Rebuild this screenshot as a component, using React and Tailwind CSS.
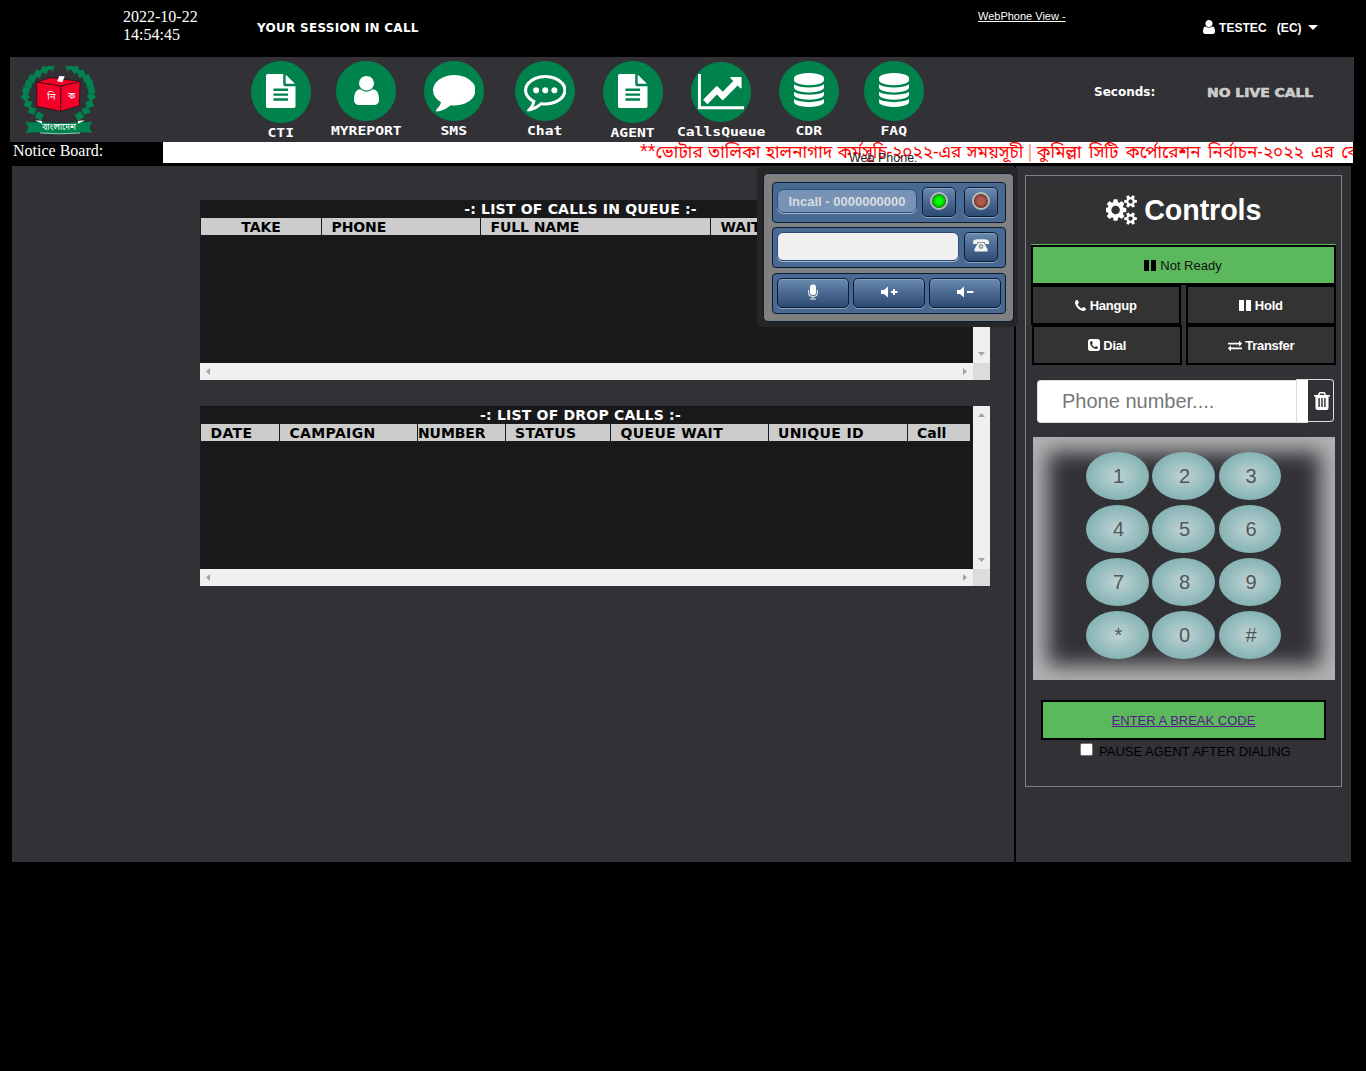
import React from "react";

const PATHS = {
  file: {
    box: "128 0 1536 1792",
    d: "M1596 476q14 14 28 36h-472v-472q22 14 36 28zm-476 164h544v1056q0 40-28 68t-68 28h-1344q-40 0-68-28t-28-68v-1600q0-40 28-68t68-28h800v544q0 40 28 68t68 28zm160 736v-64q0-14-9-23t-23-9h-704q-14 0-23 9t-9 23v64q0 14 9 23t23 9h704q14 0 23-9t9-23zm0-256v-64q0-14-9-23t-23-9h-704q-14 0-23 9t-9 23v64q0 14 9 23t23 9h704q14 0 23-9t9-23zm0-256v-64q0-14-9-23t-23-9h-704q-14 0-23 9t-9 23v64q0 14 9 23t23 9h704q14 0 23-9t9-23z",
  },
  user: {
    box: "256 128 1280 1536",
    d: "M1536 1399q0 109-62.5 187t-150.5 78h-854q-88 0-150.5-78t-62.5-187q0-85 8.5-160.5t31.5-152 58.5-131 94-89 134.5-34.5q131 128 313 128t313-128q76 0 134.5 34.5t94 89 58.5 131 31.5 152 8.5 160.5zm-256-887q0 159-112.5 271.5t-271.5 112.5-271.5-112.5-112.5-271.5 112.5-271.5 271.5-112.5 271.5 112.5 112.5 271.5z",
  },
  comment: {
    box: "0 256 1792 1540",
    d: "M1792 896q0 174-120 321.5t-326 233-450 85.5q-70 0-145-8-198 175-460 242-49 14-114 22-17 2-30.5-9t-17.5-29v-1q-3-4-.5-12t2-10 4.5-9.5l6-9 7-8.5 8-9q7-8 31-34.5t34.5-38 31-39.5 32.5-51 27-59 26-76q-157-89-247.5-220t-90.5-281q0-130 71-248.5t191-204.5 286-136.5 348-50.5q244 0 450 85.5t326 233 120 321.5z",
  },
  commenting: {
    box: "0 256 1792 1540",
    d: "M640 896q0 53-37.5 90.5t-90.5 37.5-90.5-37.5-37.5-90.5 37.5-90.5 90.5-37.5 90.5 37.5 37.5 90.5zm384 0q0 53-37.5 90.5t-90.5 37.5-90.5-37.5-37.5-90.5 37.5-90.5 90.5-37.5 90.5 37.5 37.5 90.5zm384 0q0 53-37.5 90.5t-90.5 37.5-90.5-37.5-37.5-90.5 37.5-90.5 90.5-37.5 90.5 37.5 37.5 90.5zm-512-512q-204 0-381.5 69.5t-282 187.5-104.5 255q0 112 71.5 213.5t201.5 175.5l87 50-27 96q-24 91-70 172 152-63 275-171l43-38 57 6q69 8 130 8 204 0 381.5-69.5t282-187.5 104.5-255-104.5-255-282-187.5-381.5-69.5zm896 512q0 174-120 321.5t-326 233-450 85.5q-70 0-145-8-198 175-460 242-49 14-114 22h-5q-15 0-27-10.5t-16-27.5v-1q-3-4-.5-12t2-10 4.5-9.5l6-9 7-8.5 8-9q7-8 31-34.5t34.5-38 31-39.5 32.5-51 27-59 26-76q-157-89-247.5-220t-90.5-281q0-174 120-321.5t326-233 450-85.5 450 85.5 326 233 120 321.5z",
  },
  chart: {
    box: "0 128 2048 1536",
    d: "M2048 1536v128h-2048v-1536h128v1408h1920zm-128-1248v435q0 21-19.5 29.5t-35.5-7.5l-121-121-633 633q-10 10-23 10t-23-10l-233-233-416 416-192-192 585-585q10-10 23-10t23 10l233 233 464-464-121-121q-16-16-7.5-35.5t29.5-19.5h435q14 0 23 9t9 23z",
  },
  database: {
    box: "128 0 1536 1792",
    d: "M896 768q237 0 443-43t325-127v170q0 69-103 128t-280 93.5-385 34.5-385-34.5-280-93.5-103-128v-170q119 84 325 127t443 43zm0 768q237 0 443-43t325-127v170q0 69-103 128t-280 93.5-385 34.5-385-34.5-280-93.5-103-128v-170q119 84 325 127t443 43zm0-384q237 0 443-43t325-127v170q0 69-103 128t-280 93.5-385 34.5-385-34.5-280-93.5-103-128v-170q119 84 325 127t443 43zm0-1152q208 0 385 34.5t280 93.5 103 128v128q0 69-103 128t-280 93.5-385 34.5-385-34.5-280-93.5-103-128v-128q0-69 103-128t280-93.5 385-34.5z",
  },
  cogs: {
    box: "0 0 1920 1792",
    d: "M832 896q0-106-75-181t-181-75-181 75-75 181 75 181 181 75 181-75 75-181zm768 512q0-52-38-90t-90-38-90 38-38 90q0 53 37.5 90.5t90.5 37.5 90.5-37.5 37.5-90.5zm0-1024q0-52-38-90t-90-38-90 38-38 90q0 53 37.5 90.5t90.5 37.5 90.5-37.5 37.5-90.5zm-384 421v185q0 10-7 19.5t-16 10.5l-155 24q-11 35-32 76 34 48 90 115 7 11 7 20 0 12-7 19-23 30-82.5 89.5t-78.5 59.5q-11 0-21-7l-115-90q-37 19-77 31-11 108-23 155-7 24-30 24h-186q-11 0-20-7.5t-10-17.5l-23-153q-34-10-75-31l-118 89q-7 7-20 7-11 0-21-8-144-133-144-160 0-9 7-19 10-14 41-53t47-61q-23-44-35-82l-152-24q-10-1-17-9.5t-7-19.5v-185q0-10 7-19.5t16-10.5l155-24q11-35 32-76-34-48-90-115-7-11-7-20 0-12 7-20 22-30 82-89t79-59q11 0 21 7l115 90q34-18 77-32 11-108 23-154 7-24 30-24h186q11 0 20 7.5t10 17.5l23 153q34 10 75 31l118-89q8-7 20-7 11 0 21 8 144 133 144 160 0 8-7 19-12 16-42 54t-45 60q23 48 34 82l152 23q10 2 17 10.5t7 19.5zm640 533v140q0 16-149 31-12 27-30 52 51 113 51 138 0 4-4 7-122 71-124 71-8 0-46-47t-52-68q-20 2-30 2t-30-2q-14 21-52 68t-46 47q-2 0-124-71-4-3-4-7 0-25 51-138-18-25-30-52-149-15-149-31v-140q0-16 149-31 13-29 30-52-51-113-51-138 0-4 4-7 4-2 35-20t59-34 30-16q8 0 46 46.5t52 67.5q20-2 30-2t30 2q51-71 92-112l6-2q4 0 124 70 4 3 4 7 0 25-51 138 17 23 30 52 149 15 149 31zm0-1024v140q0 16-149 31-12 27-30 52 51 113 51 138 0 4-4 7-122 71-124 71-8 0-46-47t-52-68q-20 2-30 2t-30-2q-14 21-52 68t-46 47q-2 0-124-71-4-3-4-7 0-25 51-138-18-25-30-52-149-15-149-31v-140q0-16 149-31 13-29 30-52-51-113-51-138 0-4 4-7 4-2 35-20t59-34 30-16q8 0 46 46.5t52 67.5q20-2 30-2t30 2q51-71 92-112l6-2q4 0 124 70 4 3 4 7 0 25-51 138 17 23 30 52 149 15 149 31z",
  },
  phone: {
    box: "192 128 1408 1408",
    d: "M1600 1240q0 27-10 70.5t-21 68.5q-21 50-122 106-94 51-186 51-27 0-53-3.5t-57.5-12.5-47-14.5-55.5-20.5-49-18q-98-35-175-83-127-79-264-216t-216-264q-48-77-83-175-3-9-18-49t-20.5-55.5-14.5-47-12.5-57.5-3.5-53q0-92 51-186 56-101 106-122 25-11 68.5-21t70.5-10q14 0 21 3 18 6 53 76 11 19 30 54t35 63.5 31 53.5q3 4 17.5 25t21.5 35.5 7 28.5q0 20-28.5 50t-62 55-62 53-28.5 46q0 9 5 22.5t8.5 20.5 14 24 11.5 19q76 137 174 235t235 174q2 1 19 11.5t24 14 20.5 8.5 22.5 5q18 0 46-28.5t53-62 55-62 50-28.5q14 0 28.5 7t35.5 21.5 25 17.5q25 15 53.5 31t63.5 35 54 30q70 35 76 53 3 7 3 21z",
  },
  phoneSquare: {
    box: "128 128 1536 1536",
    d: "M1408 1193q0-11-2-16t-18-16.5-40.5-25-47.5-26.5-45.5-25-28.5-15q-5-3-19-13t-25-15-21-5q-15 0-36.5 20.5t-39.5 45-38.5 45-33.5 20.5q-7 0-16.5-3.5t-15.5-6.5-17-9.5-14-8.5q-99-55-170-126.5t-127-170.5q-2-3-8.5-14t-9.5-17-6.5-15.5-3.5-16.5q0-13 20.5-33.5t45-38.5 45-39.5 20.5-36.5q0-10-5-21t-15-25-13-19q-3-6-15-28.5t-25-45.5-26.5-47.5-25-40.5-16.5-18-16-2q-48 0-101 22-46 21-80 94.5t-34 130.5q0 16 2.5 34t5 30.5 9 33 10 29.5 12.5 33 11 30q60 164 216.5 320.5t320.5 216.5q6 2 30 11t33 12.5 29.5 10 33 9 30.5 5 34 2.5q57 0 130.5-34t94.5-80q22-53 22-101zm256-777v960q0 119-84.5 203.5t-203.5 84.5h-960q-119 0-203.5-84.5t-84.5-203.5v-960q0-119 84.5-203.5t203.5-84.5h960q119 0 203.5 84.5t84.5 203.5z",
  },
  exchange: {
    box: "0 160 1792 1472",
    d: "M1792 1184v192q0 13-9.5 22.5t-22.5 9.5h-1376v192q0 13-9.5 22.5t-22.5 9.5q-12 0-24-10l-319-320q-9-9-9-22 0-14 9-23l320-320q9-9 23-9 13 0 22.5 9.5t9.5 22.5v192h1376q13 0 22.5 9.5t9.5 22.5zm0-544q0 14-9 23l-320 320q-9 9-23 9-13 0-22.5-9.5t-9.5-22.5v-192h-1376q-13 0-22.5-9.5t-9.5-22.5v-192q0-13 9.5-22.5t22.5-9.5h1376v-192q0-14 9-23t23-9q12 0 24 10l319 319q9 9 9 23z",
  },
  trash: {
    box: "192 128 1408 1536",
    d: "M704 1376v-704q0-14-9-23t-23-9h-64q-14 0-23 9t-9 23v704q0 14 9 23t23 9h64q14 0 23-9t9-23zm256 0v-704q0-14-9-23t-23-9h-64q-14 0-23 9t-9 23v704q0 14 9 23t23 9h64q14 0 23-9t9-23zm256 0v-704q0-14-9-23t-23-9h-64q-14 0-23 9t-9 23v704q0 14 9 23t23 9h64q14 0 23-9t9-23zm-544-992h448l-48-117q-7-9-17-11h-317q-10 2-17 11zm928 32v64q0 14-9 23t-23 9h-96v948q0 83-47 143.5t-113 60.5h-832q-66 0-113-58.5t-47-141.5v-952h-96q-14 0-23-9t-9-23v-64q0-14 9-23t23-9h309l70-167q15-37 54-63t79-26h320q40 0 79 26t54 63l70 167h309q14 0 23 9t9 23z",
  },
  pause: { box: "0 0 12 12", d: "M0 0h5v12h-5zM7 0h5v12h-5z" },
  caret: { box: "0 0 10 5", d: "M0 0h10l-5 5z" },
};

function Icon({ name, className }) {
  const { box, d } = PATHS[name];
  return (
    <svg viewBox={box} preserveAspectRatio="none" className={`shrink-0 ${className}`} fill="currentColor">
      <path d={d} />
    </svg>
  );
}

const NAV = [
  { label: "CTI", icon: "file", size: "w-[29.5px] h-[34px] mb-[3px]", circle: "h-[62px]", item: "" },
  { label: "MYREPORT", icon: "user", size: "w-[25px] h-[29px] mb-[1px]", circle: "h-[60px]", item: "ml-[25px]" },
  { label: "SMS", icon: "comment", size: "w-[42.5px] h-[36.7px] mt-[5px]", circle: "h-[60px]", item: "ml-[28px]" },
  { label: "Chat", icon: "commenting", size: "w-[42.5px] h-[36.7px] mt-[5px]", circle: "h-[60px]", item: "ml-[31px]" },
  { label: "AGENT", icon: "file", size: "w-[29.5px] h-[34px] mb-[3px]", circle: "h-[62px]", item: "ml-[28px]" },
  { label: "CallsQueue", icon: "chart", size: "w-[46.5px] h-[35.3px]", circle: "mt-px h-[60px]", item: "ml-[28px]" },
  { label: "CDR", icon: "database", size: "w-[30px] h-[34px] mb-[2px]", circle: "h-[60px]", item: "ml-[28px]" },
  { label: "FAQ", icon: "database", size: "w-[30px] h-[34px] mb-[2px]", circle: "h-[60px]", item: "ml-[25px]" },
];

const LEAVES = [
  [122, 26, 20], [104, 35, 30], [84, 47, 25], [66, 61, 20], [56, 78, 15], [48, 97, 10], [46, 117, 40], [54, 138, 20], [66, 158, 20], [88, 174, 30],
  [178, 26, -20], [196, 35, -30], [214, 47, -25], [230, 61, -20], [239, 78, -15], [244, 97, -10], [244, 116, -40], [239, 138, -20], [228, 158, -20], [208, 174, -30],
];

function Logo() {
  return (
    <svg viewBox="0 0 300 255" className="mt-px h-[85px] w-[100px] shrink-0">
      {LEAVES.map(([x, y, r], i) => (
        <rect key={i} x={x - 10.5} y={y - 10} width="21" height="20" fill="#00834f" transform={`rotate(${r} ${x} ${y})`} />
      ))}
      <rect x="50" y="0" width="200" height="24" fill="#323136" />
      <path d="M80 72l42-13 88 11-57 15z" fill="#f40029" stroke="#111" strokeWidth="2" />
      <path d="M80 72l73 13-1 75-72-15z" fill="#f40029" stroke="#111" strokeWidth="2" />
      <path d="M153 85l57-15-2 73-56 17z" fill="#f40029" stroke="#111" strokeWidth="2" />
      <path d="M148 54l16 1-7 18-16-3z" fill="#fff" />
      <path d="M46 191l34 3v28l-33 3 9-17zM246 191l-26 3v28l26 3-8-17z" fill="#00834f" />
      <path d="M78 189q72 14 145 0v34q-72 9-145 0z" fill="#00834f" />
      <path d="M76 187l20 2v8zM224 187l-20 2v8z" fill="#fff" />
      <path d="M90 225q60 5 120 0" stroke="#dfe" strokeWidth="2" fill="none" />
      <text x="124" y="126" fill="#fff" fontSize="29" textAnchor="middle" fontFamily="Noto Sans Bengali, sans-serif">নি</text>
      <text x="185" y="124" fill="#fff" fontSize="27" textAnchor="middle" fontFamily="Noto Sans Bengali, sans-serif">ক</text>
      <text x="147" y="217" fill="#fff" fontSize="26" textAnchor="middle" fontFamily="Noto Sans Bengali, sans-serif">বাংলাদেশ</text>
    </svg>
  );
}

function ScrollTable({ title, columns, headClass }) {
  return (
    <div className="grid h-[180px] w-[790px] grid-cols-[773px_17px] grid-rows-[163px_17px] bg-[#19191b] font-['DejaVu_Sans'] text-[14px] font-bold">
      <div className="overflow-hidden">
        <div className="h-[18px] w-[761px] text-center leading-[18px] tracking-[0.2px] whitespace-nowrap text-white">{title}</div>
        <div className={`flex h-[17px] gap-px pl-px leading-[18px] text-black ${headClass}`}>
          {columns.map(([name, cls]) => (
            <div key={name} className={`shrink-0 whitespace-nowrap bg-[#ccc] ${cls}`}>{name}</div>
          ))}
        </div>
      </div>
      <div className="flex flex-col items-center justify-between bg-[#f0f0f0] py-[7px] text-[#a3a3a3]">
        <svg className="h-1 w-[7px]" viewBox="0 0 7 4" fill="currentColor"><path d="M0 4h7L3.5 0z" /></svg>
        <svg className="h-1 w-[7px]" viewBox="0 0 7 4" fill="currentColor"><path d="M0 0h7L3.5 4z" /></svg>
      </div>
      <div className="flex items-center justify-between bg-[#f0f0f0] px-[6px] text-[#a3a3a3]">
        <svg className="h-[7px] w-1" viewBox="0 0 4 7" fill="currentColor"><path d="M4 0v7L0 3.5z" /></svg>
        <svg className="h-[7px] w-1" viewBox="0 0 4 7" fill="currentColor"><path d="M0 0v7l4-3.5z" /></svg>
      </div>
      <div className="bg-[#dcdcdc]" />
    </div>
  );
}

const QUEUE_COLS = [
  ["TAKE", "w-[120px] text-center"],
  ["PHONE", "w-[158px] pl-[9.5px]"],
  ["FULL NAME", "w-[229px] pl-[9.5px]"],
  ["WAIT", "w-[259px] pl-[9.5px]"],
];
const DROP_COLS = [
  ["DATE", "w-[78px] pl-[9.5px]"],
  ["CAMPAIGN", "w-[137px] pl-[9.5px]"],
  ["NUMBER", "w-[87px] tracking-[-0.1px]"],
  ["STATUS", "w-[104px] pl-[9px]"],
  ["QUEUE WAIT", "w-[157px] pl-[9.5px]"],
  ["UNIQUE ID", "w-[138px] pl-[9px]"],
  ["Call", "w-[62px] pl-[9px] tracking-normal"],
];

function PhoneButton({ className, children }) {
  return (
    <button className={`flex h-[30px] shrink-0 items-center justify-center rounded-[5px] border border-[#0c1c33] bg-linear-to-b from-[#6b8ab0] to-[#2c4a72] shadow-[0_1px_0_#8da7c6,inset_0_1px_0_#86a0c0] ${className}`}>
      {children}
    </button>
  );
}

function Led({ className }) {
  return <span className={`-mt-[2px] h-[18px] w-[18px] rounded-full border-2 border-[#b9bdb9] ${className}`} />;
}

const ROW = "flex h-[41px] items-start rounded-[4px] border border-[#0c1c33] bg-[#486a92] px-[4px] pt-[4px]";

function WebPhone() {
  return (
    <div className="absolute top-[149px] left-[757px] w-[261px] font-['Liberation_Sans']">
      <div className="h-[18px] pl-[92px] text-[12.5px] leading-[18px] text-[#222]">Web Phone:</div>
      <div className="rounded-[5px] bg-[#262626] pt-[6px] pr-[4px] pb-[5px] pl-[6px]">
        <div className="flex h-[149px] flex-col gap-[5px] rounded-[5px] border border-[#0c1c33] bg-[#808080] pt-[8px] pr-[7px] pl-[8px]">
          <div className={ROW}>
            <div className="mt-[2px] flex h-[24px] w-[140px] shrink-0 items-center justify-center rounded-[7px] border border-[#2c4f7a] bg-[#7893b5] pt-px text-[13px] font-bold whitespace-nowrap text-[#d9dde2] shadow-[0_1px_0_#a3b7cf]">
              Incall - 0000000000
            </div>
            <PhoneButton className="ml-[5px] w-[34px]"><Led className="bg-[radial-gradient(circle,#00ff00_30%,#00b400_60%,#123_75%)]" /></PhoneButton>
            <PhoneButton className="ml-[8px] w-[34px]"><Led className="bg-[radial-gradient(circle,#b05a50_30%,#8a4038_60%,#2b2220_75%)]" /></PhoneButton>
          </div>
          <div className={`-mt-px ${ROW}`}>
            <div className="h-[29px] w-[182px] shrink-0 rounded-[6px] border border-[#2c4f7a] bg-[#f0f0f0] shadow-[0_1px_0_#a3b7cf]" />
            <PhoneButton className="ml-[5px] w-[34px]">
              <svg viewBox="0 0 16 13" className="-mt-[3px] h-[13px] w-4">
                <path d="M0 5V2.500Q1 .3 5 .3h6q4 0 5 2.200V5h-4V3.300H4V5z" fill="#f4f4f0" />
                <path d="M5 4h6l3.500 6v2.500h-13V10z" fill="#f4f4f0" />
                <circle cx="8" cy="7.5" r="2.4" fill="#8a9a98" />
                <circle cx="8" cy="7.5" r="1" fill="#e8e8e4" />
              </svg>
            </PhoneButton>
          </div>
          <div className={`gap-[4px] ${ROW}`}>
            <PhoneButton className="w-[72px]">
              <svg viewBox="0 0 10 16" className="-mt-[2px] h-4 w-[10px]" fill="none">
                <rect x="2" y=".5" width="6" height="10.500" rx="2.8" fill="#fff" />
                <path d="M.7 6v3.500q0 3 4.300 3t4.300-3V6M5 12.500v2M2 15h6" stroke="#e6edf2" strokeWidth="1.1" />
              </svg>
            </PhoneButton>
            <PhoneButton className="w-[72px]">
              <svg viewBox="0 0 17 12" className="-mt-[3px] h-3 w-[17px]" fill="#fff">
                <path d="M0 4h3l4-3.500v11l-4-3.500H0zM10 5h2V3h2v2h2.500v2H14v2h-2V7h-2z" />
              </svg>
            </PhoneButton>
            <PhoneButton className="w-[72px]">
              <svg viewBox="0 0 17 12" className="-mt-[3px] h-3 w-[17px]" fill="#fff">
                <path d="M0 4h3l4-3.500v11l-4-3.500H0zM10 5h6.500v2H10z" />
              </svg>
            </PhoneButton>
          </div>
        </div>
      </div>
    </div>
  );
}

function ControlButton({ icon, iconClass, className = "", children }) {
  return (
    <button className={`flex h-10 w-[150px] items-center justify-center gap-[3.5px] border-2 border-black bg-[#333] text-[13px] font-bold tracking-[-0.2px] text-white ${className}`}>
      <Icon name={icon} className={iconClass} />
      <span className="mt-[2px]">{children}</span>
    </button>
  );
}

function Controls() {
  return (
    <aside className="h-[696px] w-[335px] bg-[#323136] pt-[9px] pl-[9px] font-['Liberation_Sans']">
      <div className="h-[612px] w-[317px] border border-[#808084] px-[5px] pt-[5px]">
        <h1 className="flex h-[64px] items-center justify-center gap-[6.5px] border-b border-[#5cb85c] bg-[#323232] pb-[4px] text-[28.7px] font-bold tracking-[-0.1px] text-white">
          <Icon name="cogs" className="mb-[2px] h-[30px] w-8" />
          <span>Controls</span>
        </h1>
        <button className="flex h-10 w-full items-center justify-center gap-[4px] border-2 border-black bg-[#5cb85c] pr-px text-[13px] text-[#111]">
          <Icon name="pause" className="h-[11px] w-[12px] text-black" />
          <span className="mt-[2px]">Not Ready</span>
        </button>
        <div className="flex justify-between">
          <ControlButton icon="phone" iconClass="w-[11px] h-[11px]">Hangup</ControlButton>
          <ControlButton icon="pause" iconClass="w-[12px] h-[11px]">Hold</ControlButton>
        </div>
        <div className="flex justify-between pl-px">
          <ControlButton icon="phoneSquare" iconClass="w-[12px] h-[12px]">Dial</ControlButton>
          <ControlButton icon="exchange" iconClass="w-[14px] h-[11px]" className="tracking-[-0.3px]">Transfer</ControlButton>
        </div>
        <div className="mt-[14px] ml-[6px] flex">
          <input
            placeholder="Phone number...."
            className="mt-px h-[43px] w-[259px] rounded-l-[4px] border border-[#ddd] border-r-0 bg-white pl-6 text-[20px] text-black placeholder:text-[#777]"
          />
          <span className="h-[44px] w-[12px] border border-r-0 border-[#ddd] bg-white" />
          <button className="flex h-[43px] w-[26px] items-center justify-center rounded-r-[4px] border border-[#ddd] border-l-0 pl-[3px] text-white">
            <Icon name="trash" className="h-[18px] w-4" />
          </button>
        </div>
        <div className="mt-[14px] ml-[2px] h-[243px] w-[302px] pt-[15px] shadow-[inset_0_0_20px_15px_#b2b2b4]">
          <div className="ml-[53px] grid grid-cols-[63px_64px_62px] gap-x-[3px] gap-y-[5px]">
            {["1", "2", "3", "4", "5", "6", "7", "8", "9", "*", "0", "#"].map((k) => (
              <button key={k} className="h-12 w-full max-w-[63px] rounded-[50%] bg-[radial-gradient(ellipse_at_center,#bfd3d4_0%,#82b1b2_75%)] pl-[2px] text-[20px] text-[#50565c]">
                {k}
              </button>
            ))}
          </div>
        </div>
        <div className="mt-[20px] ml-[10px] flex h-10 w-[285px] items-center justify-center border-2 border-black bg-[#5cb85c] pt-[2px] text-[13px]">
          <a href="#" className="text-[#551a8b] underline">ENTER A BREAK CODE</a>
        </div>
        <label className="mt-[2px] ml-[49px] flex items-center text-[13px] leading-[20px] text-black">
          <span className="mr-[6px] -mt-[5px] h-[13px] w-[13px] rounded-[2px] border border-[#767676] bg-white" />
          <span className="whitespace-nowrap">PAUSE AGENT AFTER DIALING</span>
        </label>
      </div>
    </aside>
  );
}

export default function App() {
  return (
    <div className="relative h-[1071px] w-[1366px] overflow-hidden bg-black">
      <header className="flex h-[57px] items-start text-white">
        <div className="ml-[123px] w-[134px] pt-2 font-['Liberation_Serif'] text-[16px] leading-[18px]">
          2022-10-22
          <br />
          14:54:45
        </div>
        <div className="w-[721px] pt-[19px] font-['DejaVu_Sans'] text-[12px] leading-[18px] font-bold tracking-[0.28px]">YOUR SESSION IN CALL</div>
        <a href="#" className="w-[225px] pt-[9px] font-['Liberation_Sans'] text-[11px] leading-[14px] underline">WebPhone View -</a>
        <div className="flex items-center pt-[19px] font-['Liberation_Sans'] text-[12px] leading-[18px] font-bold whitespace-pre">
          <Icon name="user" className="mb-[2px] h-[14px] w-3" />
          <span className="ml-[4px] tracking-[0.05px]">TESTEC   (EC)</span>
          <Icon name="caret" className="mb-px ml-[6px] h-[5px] w-[10px]" />
        </div>
      </header>

      <nav className="ml-[10px] flex h-[85px] w-[1344px] items-start bg-[#323136] text-white">
        <Logo />
        <div className="ml-[141px] flex items-start pt-1">
          {NAV.map((n) => (
            <a key={n.label} href="#" className={`flex w-[60px] flex-col items-center ${n.item}`}>
              <span className={`flex w-[60px] items-center justify-center rounded-[50%] bg-[#00824d] ${n.circle}`}>
                <Icon name={n.icon} className={n.size} />
              </span>
              <span className="mt-px scale-x-[1.13] font-['DejaVu_Sans_Mono'] text-[13px] leading-[18px] font-bold">{n.label}</span>
            </a>
          ))}
        </div>
        <div className="ml-[170px] pt-[26px] font-['DejaVu_Sans'] text-[12px] leading-[18px] font-bold">Seconds:</div>
        <div className="ml-[52px] origin-left scale-x-[1.16] pt-[27px] font-['DejaVu_Sans'] text-[12px] leading-[18px] font-bold whitespace-nowrap text-[#ccc] [-webkit-text-stroke:0.6px_#ccc]">NO LIVE CALL</div>
      </nav>

      <div className="flex h-[21px]">
        <div className="w-[163px] pl-[13px] font-['Liberation_Serif'] text-[16px] leading-[18px] text-white">Notice Board:</div>
        <div className="h-[21px] w-[1190px] overflow-hidden bg-white pl-[477px] font-['Noto_Sans_Bengali',sans-serif] text-[17.2px] leading-[23px] whitespace-pre text-[#f00]">
          <span className="font-['Liberation_Sans'] text-[20px] leading-[0]">**</span>
          <span className="[word-spacing:1px]">ভোটার তালিকা হালনাগাদ কর্মসূচি-২০২২-এর সময়সূচী</span>
          <span className="text-[#ff8080] [word-spacing:-2.5px]"> | </span>
          <span className="[word-spacing:3px]">কুমিল্লা সিটি কর্পোরেশন নির্বাচন-২০২২ এর কেন্দ্র</span>
        </div>
      </div>

      <main className="mt-[3px] ml-[12px] flex gap-[2px]">
        <section className="flex h-[696px] w-[1002px] flex-col gap-[26px] bg-[#323136] pt-[34px] pl-[188px]">
          <ScrollTable title="-: LIST OF CALLS IN QUEUE :-" columns={QUEUE_COLS} headClass="tracking-[-0.1px]" />
          <ScrollTable title="-: LIST OF DROP CALLS :-" columns={DROP_COLS} headClass="tracking-[0.35px]" />
        </section>
        <Controls />
      </main>

      <WebPhone />
    </div>
  );
}
